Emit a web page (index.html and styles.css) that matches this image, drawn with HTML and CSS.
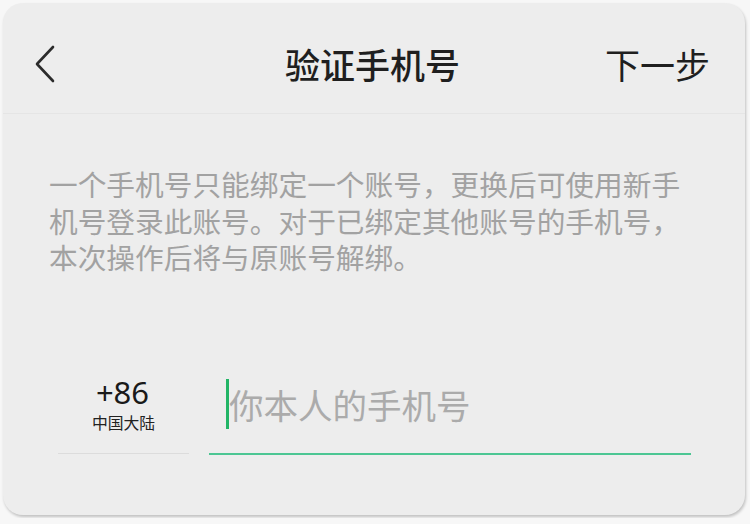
FILE: index.html
```html
<!DOCTYPE html>
<html lang="zh-CN">
<head>
<meta charset="utf-8">
<title>验证手机号</title>
<link rel="stylesheet" href="styles.css">
</head>
<body>
<div class="card">
  <header class="header">
    <div class="back">
      <svg width="22" height="38" viewBox="0 0 22 38"><polyline points="18,2 2,19 18,36" fill="none" stroke="#2b2b2b" stroke-width="2.6" stroke-linecap="round" stroke-linejoin="round"/></svg>
    </div>
    <div class="title">验证手机号</div>
    <div class="next">下一步</div>
  </header>
  <p class="desc">一个手机号只能绑定一个账号，更换后可使用新手机号登录此账号。对于已绑定其他账号的手机号，本次操作后将与原账号解绑。</p>
  <div class="phone-row">
    <div class="region">
      <div class="code">+86</div>
      <div class="region-name">中国大陆</div>
    </div>
    <div class="input">
      <span class="cursor"></span>
      <span class="placeholder">你本人的手机号</span>
    </div>
  </div>
</div>
</body>
</html>
```
FILE: styles.css
```css
html, body {
  margin: 0;
  padding: 0;
  background: #f7f7f7;
}
body {
  font-family: "Noto Sans CJK SC", "Noto Sans", sans-serif;
  padding: 3px;
}
.card {
  width: 742px;
  height: 512px;
  box-sizing: border-box;
  background: #ededed;
  border-radius: 20px;
  box-shadow: 1px 2px 3px rgba(0, 0, 0, 0.22);
}
.header {
  height: 111px;
  box-sizing: border-box;
  padding: 12px 35px 0 32px;
  display: grid;
  grid-template-columns: 1fr auto 1fr;
  align-items: center;
  border-bottom: 1px solid #e5e5e5;
}
.back {
  display: flex;
  align-items: center;
}
.back svg {
  display: block;
}
.title {
  font-size: 35px;
  font-weight: 500;
  color: #1f1f1f;
  line-height: 40px;
}
.next {
  justify-self: end;
  font-size: 35px;
  color: #1f1f1f;
  line-height: 40px;
}
.desc {
  margin: 52px 0 0 46px;
  width: 640px;
  font-size: 28.7px;
  line-height: 36.5px;
  color: #a2a2a2;
}
.phone-row {
  margin: 98px 54px 0 55px;
  display: flex;
  gap: 20px;
  align-items: stretch;
}
.region {
  width: 131px;
  flex: none;
  display: flex;
  flex-direction: column;
  align-items: center;
  padding-bottom: 19px;
  border-bottom: 1px solid #dcdcdc;
}
.code {
  font-family: "Noto Sans", sans-serif;
  font-size: 31px;
  line-height: 36px;
  color: #1a1a1a;
  margin-left: -2px;
}
.region-name {
  margin-top: 2px;
  font-size: 15.8px;
  line-height: 22px;
  color: #222;
}
.input {
  flex: 1;
  display: flex;
  align-items: flex-start;
  padding: 5px 0 0 17px;
  border-bottom: 2px solid #4cc693;
  margin-bottom: -1px;
}
.cursor {
  width: 3px;
  height: 50px;
  background: #22b566;
  flex: none;
}
.placeholder {
  font-size: 34.5px;
  line-height: 50px;
  color: #ababab;
  margin-left: 0;
}
```
